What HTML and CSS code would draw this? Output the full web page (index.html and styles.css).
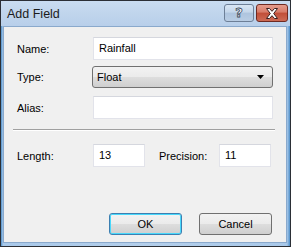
FILE: index.html
```html
<!DOCTYPE html>
<html>
<head>
<meta charset="utf-8">
<link rel="stylesheet" href="styles.css">
</head>
<body>
<div class="window">
  <div class="titlebar">
    <span class="title">Add Field</span>
    <div class="caption-buttons">
      <div class="cbtn help"><span class="qmark">?</span></div>
      <div class="cbtn close">
        <svg width="14" height="11" viewBox="0 0 14 11"><path d="M1.5 0.5 L4.5 0.5 L7 3.3 L9.5 0.5 L12.5 0.5 L8.7 5.5 L12.5 10.5 L9.5 10.5 L7 7.7 L4.5 10.5 L1.5 10.5 L5.3 5.5 Z" fill="#fff" stroke="#3a2020" stroke-width="1" stroke-linejoin="round"/></svg>
      </div>
    </div>
  </div>
  <div class="content">
    <div class="row row-name">
      <span class="label">Name:</span>
      <div class="input wide">Rainfall</div>
    </div>
    <div class="row row-type">
      <span class="label">Type:</span>
      <div class="select">
        <span>Float</span>
        <svg width="8" height="4" viewBox="0 0 8 4"><path d="M0 0 H7 L3.5 4 Z" fill="#000"/></svg>
      </div>
    </div>
    <div class="row row-alias">
      <span class="label">Alias:</span>
      <div class="input wide"></div>
    </div>
    <div class="separator"></div>
    <div class="row row-len">
      <span class="label">Length:</span>
      <div class="input short">13</div>
      <span class="label label-prec">Precision:</span>
      <div class="input short">11</div>
    </div>
    <div class="buttons">
      <div class="btn default">OK</div>
      <div class="btn">Cancel</div>
    </div>
  </div>
</div>
</body>
</html>
```
FILE: styles.css
```css
html, body {
  margin: 0;
  padding: 0;
}
body {
  width: 291px;
  height: 247px;
  overflow: hidden;
  font-family: "Liberation Sans", Arial, sans-serif;
  font-size: 11px;
  color: #000;
}
.window {
  box-sizing: border-box;
  width: 291px;
  height: 247px;
  border: 1px solid #2b2f36;
  background: linear-gradient(to right, #4f8fc9 0, #a9c9ea 2px, #b4cfeb 50%, #a9c9ea calc(100% - 3px), #4f8fc9 100%);
  display: flex;
  flex-direction: column;
}
.titlebar {
  height: 25px;
  flex: none;
  display: flex;
  align-items: flex-start;
  justify-content: space-between;
  background: linear-gradient(to bottom, #c9dcf1 0, #c0d5ec 50%, #b8cfea 100%);
}
.title {
  font-family: "Liberation Sans", Arial, sans-serif;
  font-size: 12.5px;
  color: #1b1b1b;
  margin: 6px 0 0 6px;
}
.caption-buttons {
  display: flex;
  gap: 2px;
  margin: 3px 2px 0 0;
}
.cbtn {
  box-sizing: border-box;
  height: 18px;
  border-radius: 3px;
  display: flex;
  align-items: center;
  justify-content: center;
}
.help {
  width: 30px;
  border: 1px solid #6d7f97;
  background: linear-gradient(to bottom, #d9e6f4 0, #c4d6ea 45%, #aec4de 50%, #b9cde4 100%);
}
.qmark {
  font-family: "DejaVu Sans", sans-serif;
  font-weight: bold;
  font-size: 13px;
  color: #fff;
  -webkit-text-stroke: 0.8px #3a4a5c;
  line-height: 1;
  margin-top: -1px;
}
.close {
  width: 32px;
  border: 1px solid #6e2a22;
  background: linear-gradient(to bottom, #e59c8d 0, #d77b68 45%, #c14e38 50%, #cc6a55 100%);
}
.content {
  flex: 1;
  margin: 0 3px 3px 2px;
  background: #f0f0f0;
  border: 1px solid #8aa9cc;
  box-sizing: border-box;
  display: flex;
  flex-direction: column;
}
.row {
  display: flex;
  align-items: center;
}
.label {
  width: 76px;
  padding-left: 13px;
  flex: none;
}
.row-name { margin-top: 10px; }
.row-type { margin-top: 6px; }
.row-alias { margin-top: 8px; }
.input {
  box-sizing: border-box;
  height: 23px;
  background: #fff;
  border: 1px solid #e2e3ea;
  border-top-color: #d5d7de;
  padding: 0 5px;
  line-height: 21px;
  font-size: 11px;
}
.wide { width: 180px; }
.short { width: 52px; }
.select {
  box-sizing: border-box;
  width: 181px;
  height: 22px;
  margin-left: -1px;
  border: 1px solid #707070;
  border-radius: 3px;
  background: linear-gradient(to bottom, #f2f2f2 0, #ebebeb 48%, #dddddd 52%, #cfcfcf 100%);
  display: flex;
  align-items: center;
  justify-content: space-between;
  padding: 0 7px 0 4px;
}
.separator {
  margin: 10px 11px 0 9px;
  height: 1px;
  background: #a0a0a0;
  border-bottom: 1px solid #fff;
}
.row-len { margin-top: 13px; }
.label-prec {
  padding-left: 14px;
  width: 60px;
}
.buttons {
  margin-top: 46px;
  display: flex;
  gap: 17px;
  padding-left: 105px;
}
.btn {
  box-sizing: border-box;
  width: 73px;
  height: 22px;
  border: 1px solid #707070;
  border-radius: 3px;
  background: linear-gradient(to bottom, #f2f2f2 0, #ebebeb 48%, #dddddd 52%, #cfcfcf 100%);
  display: flex;
  align-items: center;
  justify-content: center;
}
.btn.default {
  border-color: #3c7fb1;
  box-shadow: inset 0 0 0 1px #48d8fb;
}
```
